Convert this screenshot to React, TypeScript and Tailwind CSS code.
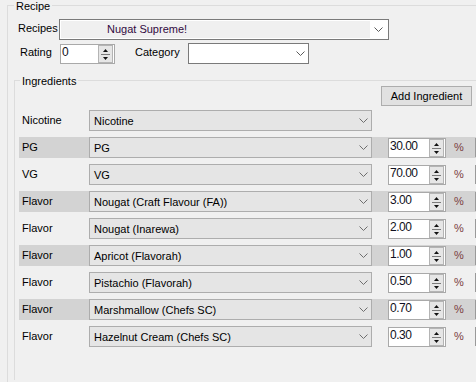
import React from "react"

type Row = { type: string; name: string; amount?: string }

const rows: Row[] = [
  { type: "Nicotine", name: "Nicotine" },
  { type: "PG", name: "PG", amount: "30.00" },
  { type: "VG", name: "VG", amount: "70.00" },
  { type: "Flavor", name: "Nougat (Craft Flavour (FA))", amount: "3.00" },
  { type: "Flavor", name: "Nougat (Inarewa)", amount: "2.00" },
  { type: "Flavor", name: "Apricot (Flavorah)", amount: "1.00" },
  { type: "Flavor", name: "Pistachio (Flavorah)", amount: "0.50" },
  { type: "Flavor", name: "Marshmallow (Chefs SC)", amount: "0.70" },
  { type: "Flavor", name: "Hazelnut Cream (Chefs SC)", amount: "0.30" },
]

function Chevron({ color = "#5a5a5a" }: { color?: string }) {
  return (
    <svg width="9" height="5" viewBox="0 0 9 5" className="block">
      <path d="M0.5 0.5 L4.5 4.5 L8.5 0.5" fill="none" stroke={color} strokeWidth="1" />
    </svg>
  )
}

function Spin() {
  return (
    <div className="flex h-[18px] w-[15px] shrink-0 flex-col border border-[#b4b4b4] bg-[#e6e6e6]">
      <div className="flex h-[8px] items-center justify-center">
        <svg width="5" height="3" viewBox="0 0 5 3" className="block">
          <path d="M0 3 L2.5 0 L5 3 Z" fill="#111" />
        </svg>
      </div>
      <div className="mx-[2px] h-px bg-[#7a7a7a]" />
      <div className="flex h-[7px] items-center justify-center">
        <svg width="5" height="3" viewBox="0 0 5 3" className="block">
          <path d="M0 0 L2.5 3 L5 0 Z" fill="#111" />
        </svg>
      </div>
    </div>
  )
}

function NumBox({ value, className }: { value: string; className: string }) {
  return (
    <div className={`flex h-[20px] shrink-0 border border-[#a9a9a9] bg-white pr-[1px] ${className}`}>
      <span className="flex-1 pl-[1px] text-[12px] leading-[14px] tracking-[-0.5px] text-[#101020]">{value}</span>
      <Spin />
    </div>
  )
}

export default function App() {
  return (
    <div className="h-[382px] w-[476px] overflow-hidden bg-[#f0f0f0] font-['Liberation_Sans',Arial,sans-serif] text-[11px] leading-[13px] text-black">
      {/* Recipe group */}
      <div className="relative ml-[7px] mt-[5px] h-[377px] border-l border-t border-[#dcdcdc]">
        <span className="absolute left-[6px] top-[-6px] bg-[#f0f0f0] px-[2px]">Recipe</span>

        <div className="mt-[13px] flex items-start pl-[10px]">
          <div className="w-[41px] shrink-0 pt-[3px]">Recipes</div>
          <div className="flex h-[21px] w-[330px] shrink-0 border border-[#7a7a7a] bg-white p-[1px]">
            <div className="flex-1 bg-[#f0f0f0] pl-[46px] pt-[2px] text-[#300a40]">Nugat Supreme!</div>
            <div className="flex w-[17px] items-center justify-center">
              <Chevron />
            </div>
          </div>
        </div>

        <div className="mt-[3px] flex items-start pl-[12px]">
          <div className="w-[40px] shrink-0 pt-[3px]">Rating</div>
          <NumBox value="0" className="mt-[1px] w-[55px]" />
          <div className="ml-[20px] w-[53px] shrink-0 pt-[3px]">Category</div>
          <div className="flex h-[21px] w-[121px] shrink-0 items-center justify-end border border-[#7a7a7a] bg-white pr-[3px]">
            <Chevron />
          </div>
        </div>

        {/* Ingredients group */}
        <div className="relative ml-[6px] mt-[16px] h-[300px] border-l border-t border-[#dcdcdc]">
          <span className="absolute left-[5px] top-[-6px] bg-[#f0f0f0] px-[2px]">Ingredients</span>

          <div className="ml-[366px] mt-[5px] flex h-[20px] w-[91px] items-center justify-center border border-[#adadad] bg-[#e1e1e1]">
            Add Ingredient
          </div>

          <div className="ml-[4px] mt-[4px] flex flex-col gap-[6px]">
            {rows.map((r, i) => (
              <div key={i} className={`flex h-[21px] items-start ${i % 2 === 1 ? "bg-[#d3d3d3]" : ""}`}>
                <div className="w-[70px] shrink-0 pl-[3px] pt-[4px]">{r.type}</div>
                <div className="flex h-[21px] w-[283px] shrink-0 items-start justify-between border border-[#adadad] bg-[#e5e5e5] pl-[4px] pr-[3px]">
                  <span className="pt-[4px]">{r.name}</span>
                  <div className="pt-[7px]">
                    <Chevron color="#6e6e6e" />
                  </div>
                </div>
                {r.amount && (
                  <>
                    <NumBox value={r.amount} className="ml-[16px] mt-[1px] w-[58px]" />
                    <div className="ml-[8px] w-[21px] shrink-0 pt-[4px] text-[#7a3c3c]">%</div>
                    <div className="mt-[1px] h-[19px] w-[6px] shrink-0 border-l border-[#9a9a9a] bg-[#e1e1e1]" />
                  </>
                )}
              </div>
            ))}
          </div>
        </div>
      </div>
    </div>
  )
}
